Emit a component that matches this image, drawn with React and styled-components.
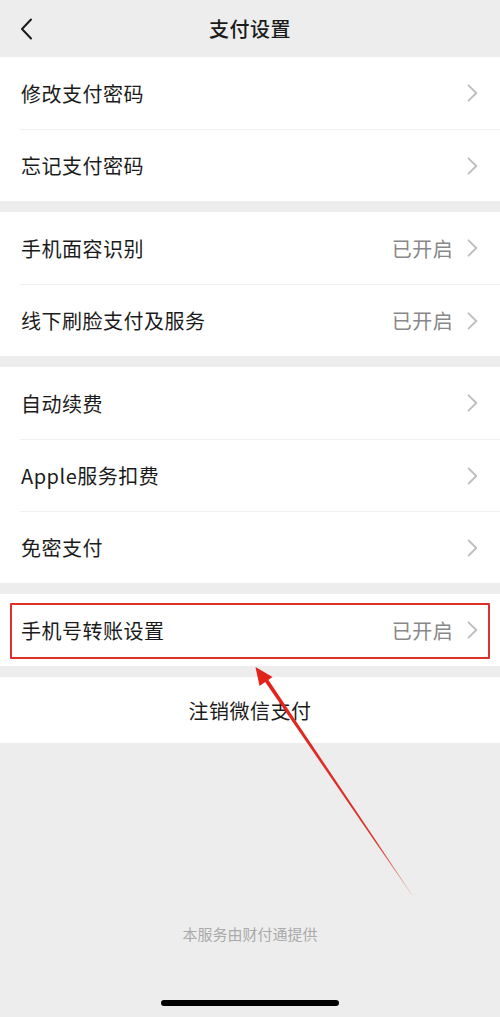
import React from "react";
import styled, { createGlobalStyle } from "styled-components";

const GlobalStyle = createGlobalStyle`
  html, body {
    margin: 0;
    padding: 0;
    background: #ededed;
  }
  body {
    font-family: "Noto Sans CJK SC", "Noto Sans", sans-serif;
    color: #1b1b1b;
  }
`;

const groups = [
  [{ label: "修改支付密码" }, { label: "忘记支付密码" }],
  [
    { label: "手机面容识别", value: "已开启" },
    { label: "线下刷脸支付及服务", value: "已开启" },
  ],
  [{ label: "自动续费" }, { label: "Apple服务扣费" }, { label: "免密支付" }],
  [{ label: "手机号转账设置", value: "已开启", marked: true }],
];

const Chevron = ({ color = "#bdbdbd", size = 12 }) => (
  <svg width={size * 0.6} height={size} viewBox="0 0 8 14" fill="none">
    <path d="M1 1l6 6-6 6" stroke={color} strokeWidth="1.4" strokeLinecap="round" strokeLinejoin="round" />
  </svg>
);

export default function App() {
  return (
    <>
      <GlobalStyle />
      <Page>
        <Header>
          <Back>
            <svg width="13" height="22" viewBox="0 0 13 22" fill="none">
              <path d="M11 1.5L2 11l9 9.5" stroke="#1b1b1b" strokeWidth="2" strokeLinecap="round" strokeLinejoin="round" />
            </svg>
          </Back>
          <Title>支付设置</Title>
        </Header>

        {groups.map((rows, gi) => (
          <Group key={gi}>
            {rows.map((row) => (
              <Row key={row.label}>
                <Label>{row.label}</Label>
                <Right>
                  {row.value && <Value>{row.value}</Value>}
                  <Chevron size={18} />
                </Right>
                {row.marked && <Mark />}
              </Row>
            ))}
          </Group>
        ))}

        <Group>
          <Cancel>注销微信支付</Cancel>
        </Group>

        <Spacer />
        <Footer>本服务由财付通提供</Footer>
        <HomeBar />

        <Arrow width="500" height="1017" viewBox="0 0 500 1017">
          <defs>
            <linearGradient id="tail" x1="266" y1="682" x2="412" y2="895" gradientUnits="userSpaceOnUse">
              <stop offset="0" stopColor="#e2231c" />
              <stop offset="0.75" stopColor="#d8362c" />
              <stop offset="1" stopColor="#e9cfc8" />
            </linearGradient>
          </defs>
          <polygon points="264.5,681 267.8,679 412.4,895 411.8,895.3" fill="url(#tail)" />
          <polygon points="255.5,667 272.5,677 259.5,686" fill="#e2231c" />
        </Arrow>
      </Page>
    </>
  );
}

const Page = styled.div`
  position: relative;
  min-height: 1017px;
  display: flex;
  flex-direction: column;
  background: #ededed;
  overflow: hidden;
`;

const Header = styled.div`
  height: 57px;
  display: flex;
  align-items: center;
  justify-content: center;
  position: relative;
`;

const Back = styled.div`
  position: absolute;
  left: 20px;
  top: 18px;
  display: flex;
`;

const Title = styled.div`
  font-size: 20px;
  font-weight: 500;
  color: #1b1b1b;
  letter-spacing: 0.5px;
`;

const Group = styled.div`
  background: #fff;
  margin-bottom: 11px;
`;

const Row = styled.div`
  position: relative;
  box-sizing: border-box;
  height: 72px;
  display: flex;
  align-items: center;
  justify-content: space-between;
  padding: 0 22px 0 21px;
  & + & {
    border-top: 1px solid #f0f0f0;
  }
  & + &::before {
    content: "";
    position: absolute;
    left: 0;
    top: -1px;
    width: 20px;
    height: 1px;
    background: #fff;
  }
`;

const Label = styled.div`
  font-size: 20px;
  letter-spacing: 0.5px;
`;

const Right = styled.div`
  display: flex;
  align-items: center;
  gap: 14px;
`;

const Value = styled.div`
  font-size: 20px;
  color: #888;
  letter-spacing: 0.5px;
`;

const Mark = styled.div`
  position: absolute;
  left: 10px;
  right: 10px;
  top: 9px;
  bottom: 7px;
  border: 2px solid #e0302a;
  border-radius: 1px;
`;

const Cancel = styled.div`
  height: 66px;
  display: flex;
  align-items: center;
  justify-content: center;
  font-size: 20px;
  letter-spacing: 0.5px;
`;

const Spacer = styled.div`
  flex: 1;
`;

const Footer = styled.div`
  text-align: center;
  font-size: 15px;
  line-height: 20px;
  color: #aaa;
  margin-bottom: 56px;
`;

const HomeBar = styled.div`
  align-self: center;
  width: 178px;
  height: 6px;
  border-radius: 3px;
  background: #000;
  margin-bottom: 11px;
`;

const Arrow = styled.svg`
  position: absolute;
  left: 0;
  top: 0;
  pointer-events: none;
`;
